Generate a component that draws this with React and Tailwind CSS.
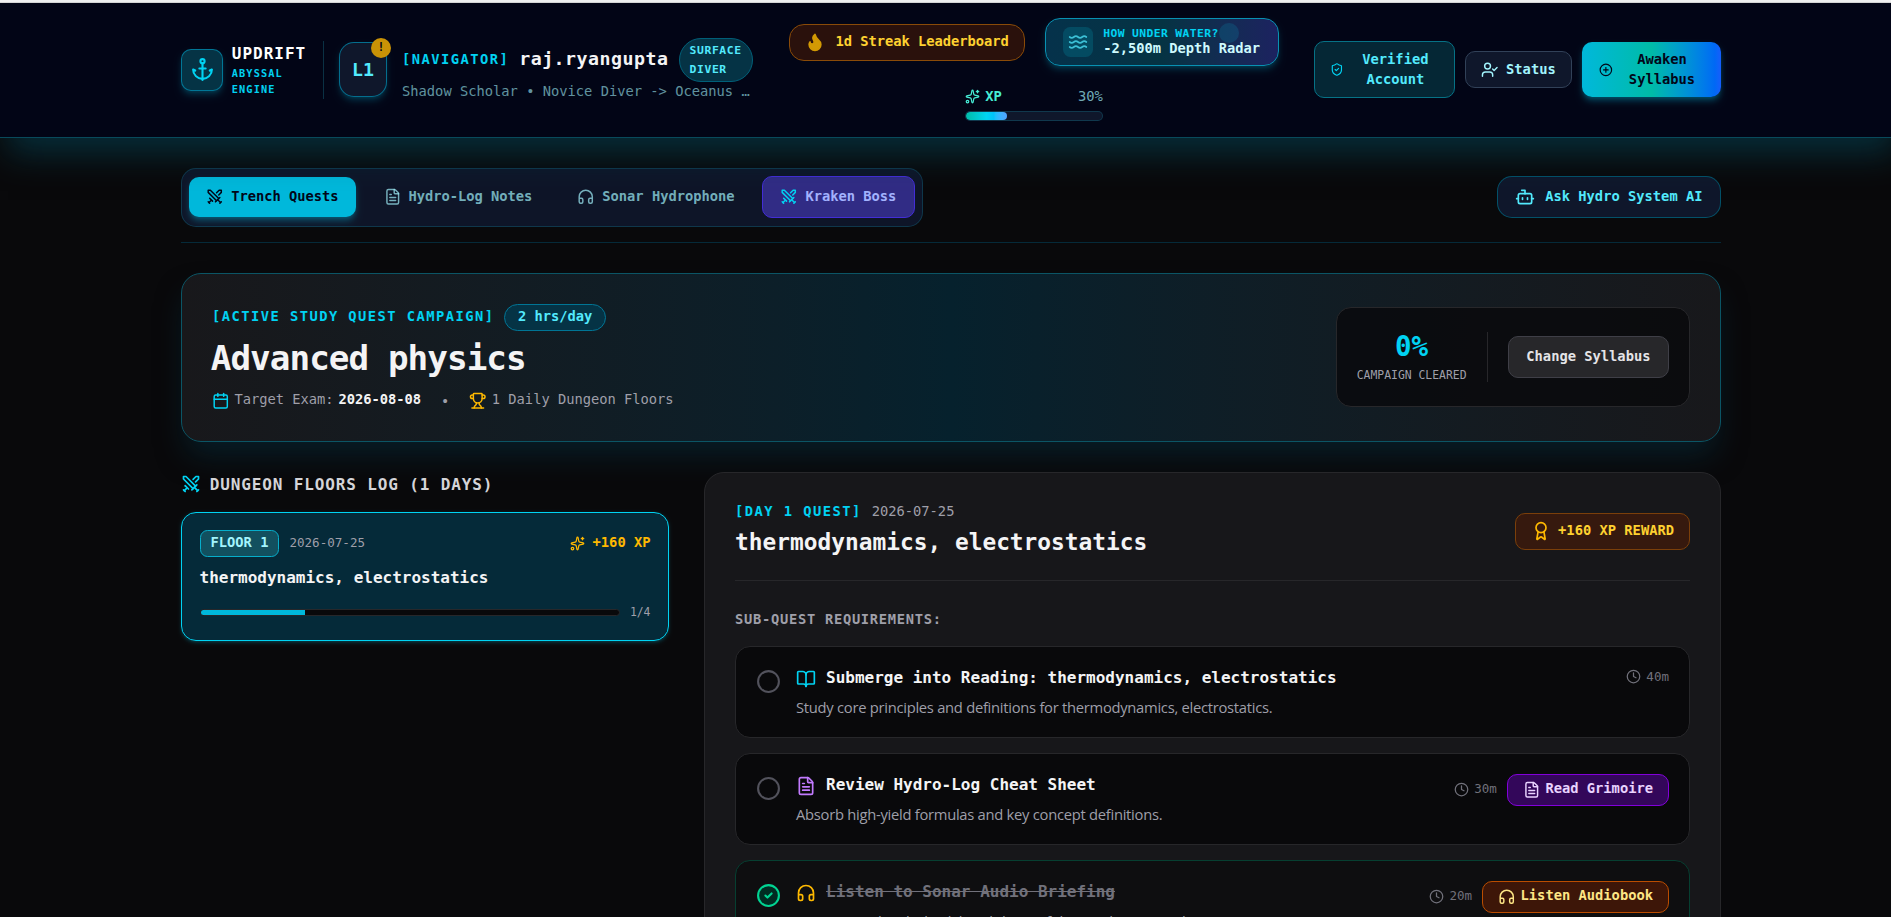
import { useState } from 'react';
import {
  Anchor,
  Award,
  BookOpen,
  Bot,
  Calendar,
  Circle,
  CircleCheck,
  CirclePlus,
  Clock,
  FileText,
  Flame,
  Headphones,
  ShieldCheck,
  Sparkles,
  Swords,
  Trophy,
  UserCheck,
  Waves,
} from 'lucide-react';

const tabs = [
  { id: 'quests', label: 'Trench Quests', icon: Swords },
  { id: 'notes', label: 'Hydro-Log Notes', icon: FileText },
  { id: 'sonar', label: 'Sonar Hydrophone', icon: Headphones },
];

const initialTasks = [
  {
    id: 1,
    title: 'Submerge into Reading: thermodynamics, electrostatics',
    description: 'Study core principles and definitions for thermodynamics, electrostatics.',
    minutes: 40,
    done: false,
    icon: BookOpen,
    iconColor: 'text-cyan-400',
  },
  {
    id: 2,
    title: 'Review Hydro-Log Cheat Sheet',
    description: 'Absorb high-yield formulas and key concept definitions.',
    minutes: 30,
    done: false,
    icon: FileText,
    iconColor: 'text-purple-400',
    action: 'Read Grimoire',
    actionClass: 'bg-[#33075a] border-purple-700 text-purple-200',
  },
  {
    id: 3,
    title: 'Listen to Sonar Audio Briefing',
    description: 'Listen to audio playback breakdown of thermodynamics, electrostatics.',
    minutes: 20,
    done: true,
    icon: Headphones,
    iconColor: 'text-amber-400',
    action: 'Listen Audiobook',
    actionClass: 'bg-[#3d1608] border-[#bb4d00] text-amber-200',
  },
];

function Label({ children, className = '' }) {
  return <span className={`block -mt-px mb-px ${className}`}>{children}</span>;
}

function Header() {
  return (
    <header className="relative h-[107.6px] bg-[#020516] border-b border-[#084a5b] shadow-[0_18px_25px_-6px_rgba(5,58,72,0.75)]">
      <div className="h-full max-w-7xl mx-auto px-6 flex items-center justify-between">
        <div className="flex items-center gap-3 w-[458px]">
          <div className="flex items-center gap-2 w-[114.4px] h-[46.4px] shrink-0 border-r border-cyan-900/60">
            <div className="p-1.5 rounded-lg bg-cyan-950 border border-cyan-600/70 text-cyan-400 shadow-md shadow-cyan-500/20">
              <Anchor className="w-5 h-5" />
            </div>
            <div className="font-bold -ml-px">
              <h1 className="text-[12.8px]/[18.4px] tracking-[0.8px] text-white">UPDRIFT</h1>
              <p className="text-[8.2px]/[13px] tracking-[0.9px] text-cyan-400">
                ABYSSAL
                <br />
                ENGINE
              </p>
            </div>
          </div>

          <div className="relative w-[38.4px] h-11 shrink-0 rounded-xl bg-slate-900 border border-cyan-600/70 flex items-center justify-center text-[14.6px]/[20px] font-bold text-cyan-300 shadow-md shadow-cyan-500/20">
            <span>L1</span>
            <span className="absolute -top-1 -right-1 w-4 h-4 rounded-full bg-[#c99306] text-[9.2px]/[15px] text-center text-slate-950">
              !
            </span>
          </div>

          <div className="w-[281px] shrink-0">
            <div className="flex items-center gap-2">
              <Label className="text-[11px]/[16px] font-bold tracking-[1.17px] text-cyan-400">[NAVIGATOR]</Label>
              <Label className="text-[14.6px]/[24px] font-bold tracking-[0.4px] text-zinc-100">raj.ryangupta</Label>
              <span className="w-[59.6px] shrink-0 px-2 py-0.5 rounded-full bg-cyan-950 border border-cyan-800 text-[9.1px]/[15px] font-bold tracking-[0.5px] text-cyan-300">
                SURFACE DIVER
              </span>
            </div>
            <Label className="text-[11px]/[16px] text-cyan-200/60 whitespace-nowrap">
              Shadow Scholar • Novice Diver -&gt; Oceanus …
            </Label>
          </div>
        </div>

        <div className="flex flex-wrap items-center justify-center gap-4 w-[400px] -mx-1">
          <button className="flex items-center gap-2 px-3 py-1.5 rounded-xl bg-[#2a110c] border border-[#8a4b08] text-[11px]/[16px] font-bold tracking-[-0.02px] text-amber-300">
            <Flame className="w-4 h-4 fill-[#d39a04] text-[#d39a04]" />
            <Label>1d Streak Leaderboard</Label>
          </button>

          <button className="relative flex items-center gap-2 px-3.5 py-1.5 rounded-xl bg-linear-to-r from-[#05324b] via-[#053343] to-[#1c2260] border border-[#0891b2] shadow-md shadow-cyan-500/20 text-left font-bold">
            <span className="absolute left-[139px] top-[3px] w-4 h-4 rounded-full bg-cyan-500/15" />
            <span className="p-1 rounded-md bg-cyan-400/15 text-[#3cc0d6]">
              <Waves className="w-4 h-4" />
            </span>
            <span>
              <span className="block text-[9.1px]/[10px] tracking-[0.3px] text-cyan-400">HOW UNDER WATER?</span>
              <span className="block text-[11px]/[15px] tracking-[-0.02px] text-cyan-100">-2,500m Depth Radar</span>
            </span>
          </button>

          <div className="w-[110px]">
            <div className="flex items-center justify-between text-[11px]/[16px]">
              <span className="flex items-center gap-1 font-bold text-[#46ecd5]">
                <Sparkles className="w-3 h-3" />
                XP
              </span>
              <span className="text-cyan-200/70">30%</span>
            </div>
            <div className="mt-1 h-2 rounded-full bg-slate-900 border border-cyan-900/60 overflow-hidden">
              <div className="h-full w-[30%] rounded-full bg-linear-to-r from-teal-500 via-cyan-400 to-blue-400" />
            </div>
          </div>
        </div>

        <div className="flex items-center gap-2 text-[11px]/[16px] font-bold">
          <button className="flex items-center gap-1.5 w-[112.5px] px-3 py-1.5 rounded-lg bg-[#052735] border border-[#067286] text-cyan-300">
            <ShieldCheck className="w-[11px] h-3 shrink-0 text-cyan-400" />
            <Label className="flex-1">Verified Account</Label>
          </button>
          <button className="flex items-center gap-1.5 px-3 py-1.5 rounded-lg bg-slate-900 border border-slate-700 text-cyan-200">
            <UserCheck className="w-3.5 h-3.5" />
            <Label>Status</Label>
          </button>
          <button className="flex items-center gap-1.5 w-[111.4px] px-3.5 py-1.5 rounded-lg bg-linear-to-r from-cyan-500 via-teal-500 to-blue-600 text-slate-950 shadow-md shadow-cyan-500/30">
            <CirclePlus className="w-[11px] h-[11px] shrink-0" />
            <Label className="flex-1">Awaken Syllabus</Label>
          </button>
        </div>
      </div>
    </header>
  );
}

function NavTabs({ active, onChange }) {
  return (
    <div className="flex items-center justify-between pb-3 border-b border-cyan-950/80 text-[11px]/[16px] font-bold">
      <div className="flex items-center gap-2 pl-[5.4px] pr-1.5 py-1.5 rounded-xl bg-slate-900/90 border border-cyan-900/60">
        {tabs.map((tab) => (
          <button
            key={tab.id}
            onClick={() => onChange(tab.id)}
            className={`flex items-center gap-1.5 px-3.5 py-2 rounded-lg tracking-[-0.02px] ${
              active === tab.id
                ? 'bg-cyan-500 text-slate-950 shadow-md shadow-cyan-500/30'
                : 'text-cyan-200/70'
            }`}
          >
            <tab.icon className="w-3.5 h-3.5" />
            <Label>{tab.label}</Label>
          </button>
        ))}
        <button className="flex items-center gap-1.5 px-3.5 py-2 rounded-lg bg-indigo-900 border border-indigo-700 text-indigo-300 tracking-[-0.02px]">
          <Swords className="w-3.5 h-3.5 text-cyan-400" />
          <Label>Kraken Boss</Label>
        </button>
      </div>

      <button className="flex items-center gap-2 px-3.5 py-2 rounded-xl bg-slate-900 border border-cyan-800/80 text-cyan-300">
        <Bot className="w-4 h-4" />
        <Label>Ask Hydro System AI</Label>
      </button>
    </div>
  );
}

function CampaignHero() {
  return (
    <section className="flex items-center justify-between p-6 rounded-2xl bg-linear-to-r from-zinc-900 via-[#06212d] to-zinc-900 border border-[#0b5565] shadow-[0_14px_24px_-5px_rgba(5,51,69,0.5)]">
      <div className="space-y-1.5">
        <div className="flex items-center gap-2 text-[11px]/[16px] font-bold">
          <Label className="tracking-[1.17px] text-cyan-400">[ACTIVE STUDY QUEST CAMPAIGN]</Label>
          <span className="px-2.5 py-0.5 rounded-full bg-cyan-950 border border-cyan-700 tracking-[-0.02px] text-cyan-300">
            <Label>2 hrs/day</Label>
          </span>
        </div>
        <h2 className="flow-root text-[27.4px]/[36px] font-bold tracking-[-0.75px] text-zinc-100">
          <span className="block -mt-[1.5px] mb-[1.5px] -ml-px">Advanced physics</span>
        </h2>
        <div className="flex items-center gap-4 text-[11px]/[16px] tracking-[-0.02px] text-zinc-400">
          <span className="flex items-center gap-1">
            <Calendar className="w-3.5 h-3.5 text-cyan-400" />
            <Label>Target Exam:</Label>
            <Label className="font-bold text-zinc-100">2026-08-08</Label>
          </span>
          <span>•</span>
          <span className="flex items-center gap-1">
            <Trophy className="w-3.5 h-3.5 text-amber-400" />
            <Label>1 Daily Dungeon Floors</Label>
          </span>
        </div>
      </div>

      <div className="flex items-center gap-4 p-4 rounded-xl bg-zinc-950/80 border border-zinc-800">
        <div className="text-center">
          <Label className="text-[22px]/[32px] font-bold text-cyan-400">0%</Label>
          <Label className="text-[9.13px]/[15px] text-zinc-400">CAMPAIGN CLEARED</Label>
        </div>
        <div className="w-px h-10 bg-zinc-800" />
        <button className="px-3.5 py-2 rounded-lg bg-zinc-800 border border-zinc-700 text-[11px]/[16px] font-bold text-zinc-200">
          <Label>Change Syllabus</Label>
        </button>
      </div>
    </section>
  );
}

function FloorsLog() {
  return (
    <div className="w-[390.4px] shrink-0 space-y-3">
      <h3 className="flex items-center gap-2 text-[12.8px]/[20px] font-bold tracking-[0.69px] text-zinc-300">
        <Swords className="w-4 h-4 text-cyan-400" />
        <span className="-ml-px">DUNGEON FLOORS LOG (1 DAYS)</span>
      </h3>

      <div className="p-3.5 rounded-xl bg-cyan-950/80 border border-cyan-400 shadow-sm shadow-cyan-500/20">
        <div className="flex items-center justify-between">
          <div className="flex items-center gap-2">
            <span className="px-2 py-0.5 rounded-md bg-[#12505f] border border-[#06aecb] text-[11px]/[16px] font-bold text-cyan-200">
              <Label>FLOOR 1</Label>
            </span>
            <span className="text-[10.05px]/[16.5px] text-zinc-400">2026-07-25</span>
          </div>
          <span className="flex items-center gap-1.5 text-[11px]/[16px] font-bold text-amber-400">
            <Sparkles className="w-3 h-3" />
            <Label>+160 XP</Label>
          </span>
        </div>
        <h4 className="flow-root mt-[7px] text-[12.8px]/[20px] font-bold text-zinc-100">
          <Label>thermodynamics, electrostatics</Label>
        </h4>
        <div className="mt-2.5 flex items-center gap-2">
          <div className="flex-1 h-1.5 rounded-full bg-zinc-950 border border-zinc-800 overflow-hidden">
            <div className="h-full w-1/4 bg-cyan-500" />
          </div>
          <span className="text-[9.13px]/[15px] text-zinc-400">1/4</span>
        </div>
      </div>
    </div>
  );
}

function TaskCard({ task, onToggle }) {
  return (
    <div
      className={`flex items-start gap-3 p-4 rounded-xl border ${
        task.done ? 'bg-[#0e0e10] border-[#063f31]' : 'bg-zinc-950 border-zinc-800'
      }`}
    >
      <button onClick={() => onToggle(task.id)} className="mt-0.5">
        {task.done ? (
          <CircleCheck className="w-5 h-5 text-emerald-400 fill-emerald-950" />
        ) : (
          <Circle className="w-5 h-5 text-zinc-600" />
        )}
      </button>
      <div className="flex-1">
        <h4
          className={`flex items-center gap-2 text-[12.8px]/[20px] font-bold ${
            task.done ? 'text-zinc-500' : 'text-zinc-100'
          }`}
        >
          <task.icon className={`w-4 h-4 ${task.iconColor}`} />
          <Label className={task.done ? 'line-through' : ''}>{task.title}</Label>
        </h4>
        <p className="mt-1 font-['Open_Sans',sans-serif] text-[11.8px]/[16px] tracking-[-0.22px] text-zinc-400">
          {task.description}
        </p>
      </div>
      <div className="flex items-center gap-2">
        <span className="flex items-center gap-1 text-[10.05px]/[16.5px] text-zinc-500">
          <Clock className="w-3 h-3" />
          <span>{task.minutes}m</span>
        </span>
        {task.action && (
          <button
            className={`flex items-center gap-1 px-3 py-1 rounded-lg border text-[11px]/[16px] font-bold ${task.actionClass}`}
          >
            <task.icon className="w-3.5 h-3.5" />
            <Label>{task.action}</Label>
          </button>
        )}
      </div>
    </div>
  );
}

export default function App() {
  const [activeTab, setActiveTab] = useState('quests');
  const [tasks, setTasks] = useState(initialTasks);

  const toggleTask = (id) => {
    setTasks(tasks.map((task) => (task.id === id ? { ...task, done: !task.done } : task)));
  };

  return (
    <div className="h-[917px] overflow-hidden bg-zinc-950">
      <div className="h-[3px] bg-[#f3f3f3] border-b border-[#d8d8d8]" />
      <div className="[zoom:1.25] w-[1521.6px] font-['DejaVu_Sans_Mono',monospace]">
        <Header />

        <main className="max-w-7xl mx-auto px-6 py-6 space-y-6">
          <NavTabs active={activeTab} onChange={setActiveTab} />
          <CampaignHero />

          <div className="flex items-start gap-7">
            <FloorsLog />

            <section className="flex-1 p-6 rounded-2xl bg-zinc-900/95 border border-zinc-800">
              <div className="flex items-center justify-between pb-[15.6px] border-b border-zinc-800">
                <div>
                  <div className="flex items-center gap-2 text-[11px]/[16px]">
                    <Label className="font-bold tracking-[1.17px] text-cyan-400">[DAY 1 QUEST]</Label>
                    <Label className="text-zinc-400">2026-07-25</Label>
                  </div>
                  <h3 className="mt-0.5 text-[18.27px]/[28px] font-bold text-zinc-100">
                    thermodynamics, electrostatics
                  </h3>
                </div>
                <div className="flex items-center gap-1.5 px-3 py-1.5 rounded-lg bg-[#36190e] border border-[#7b3f0a] text-[11px]/[16px] font-bold text-amber-300">
                  <Award className="w-4 h-4 text-amber-400" />
                  <Label>+160 XP REWARD</Label>
                </div>
              </div>

              <div className="mt-6 space-y-3">
                <h4 className="flow-root text-[11px]/[16px] font-bold tracking-[0.57px] text-zinc-400">
                  <Label>SUB-QUEST REQUIREMENTS:</Label>
                </h4>
                {tasks.map((task) => (
                  <TaskCard key={task.id} task={task} onToggle={toggleTask} />
                ))}
              </div>
            </section>
          </div>
        </main>
      </div>
    </div>
  );
}
